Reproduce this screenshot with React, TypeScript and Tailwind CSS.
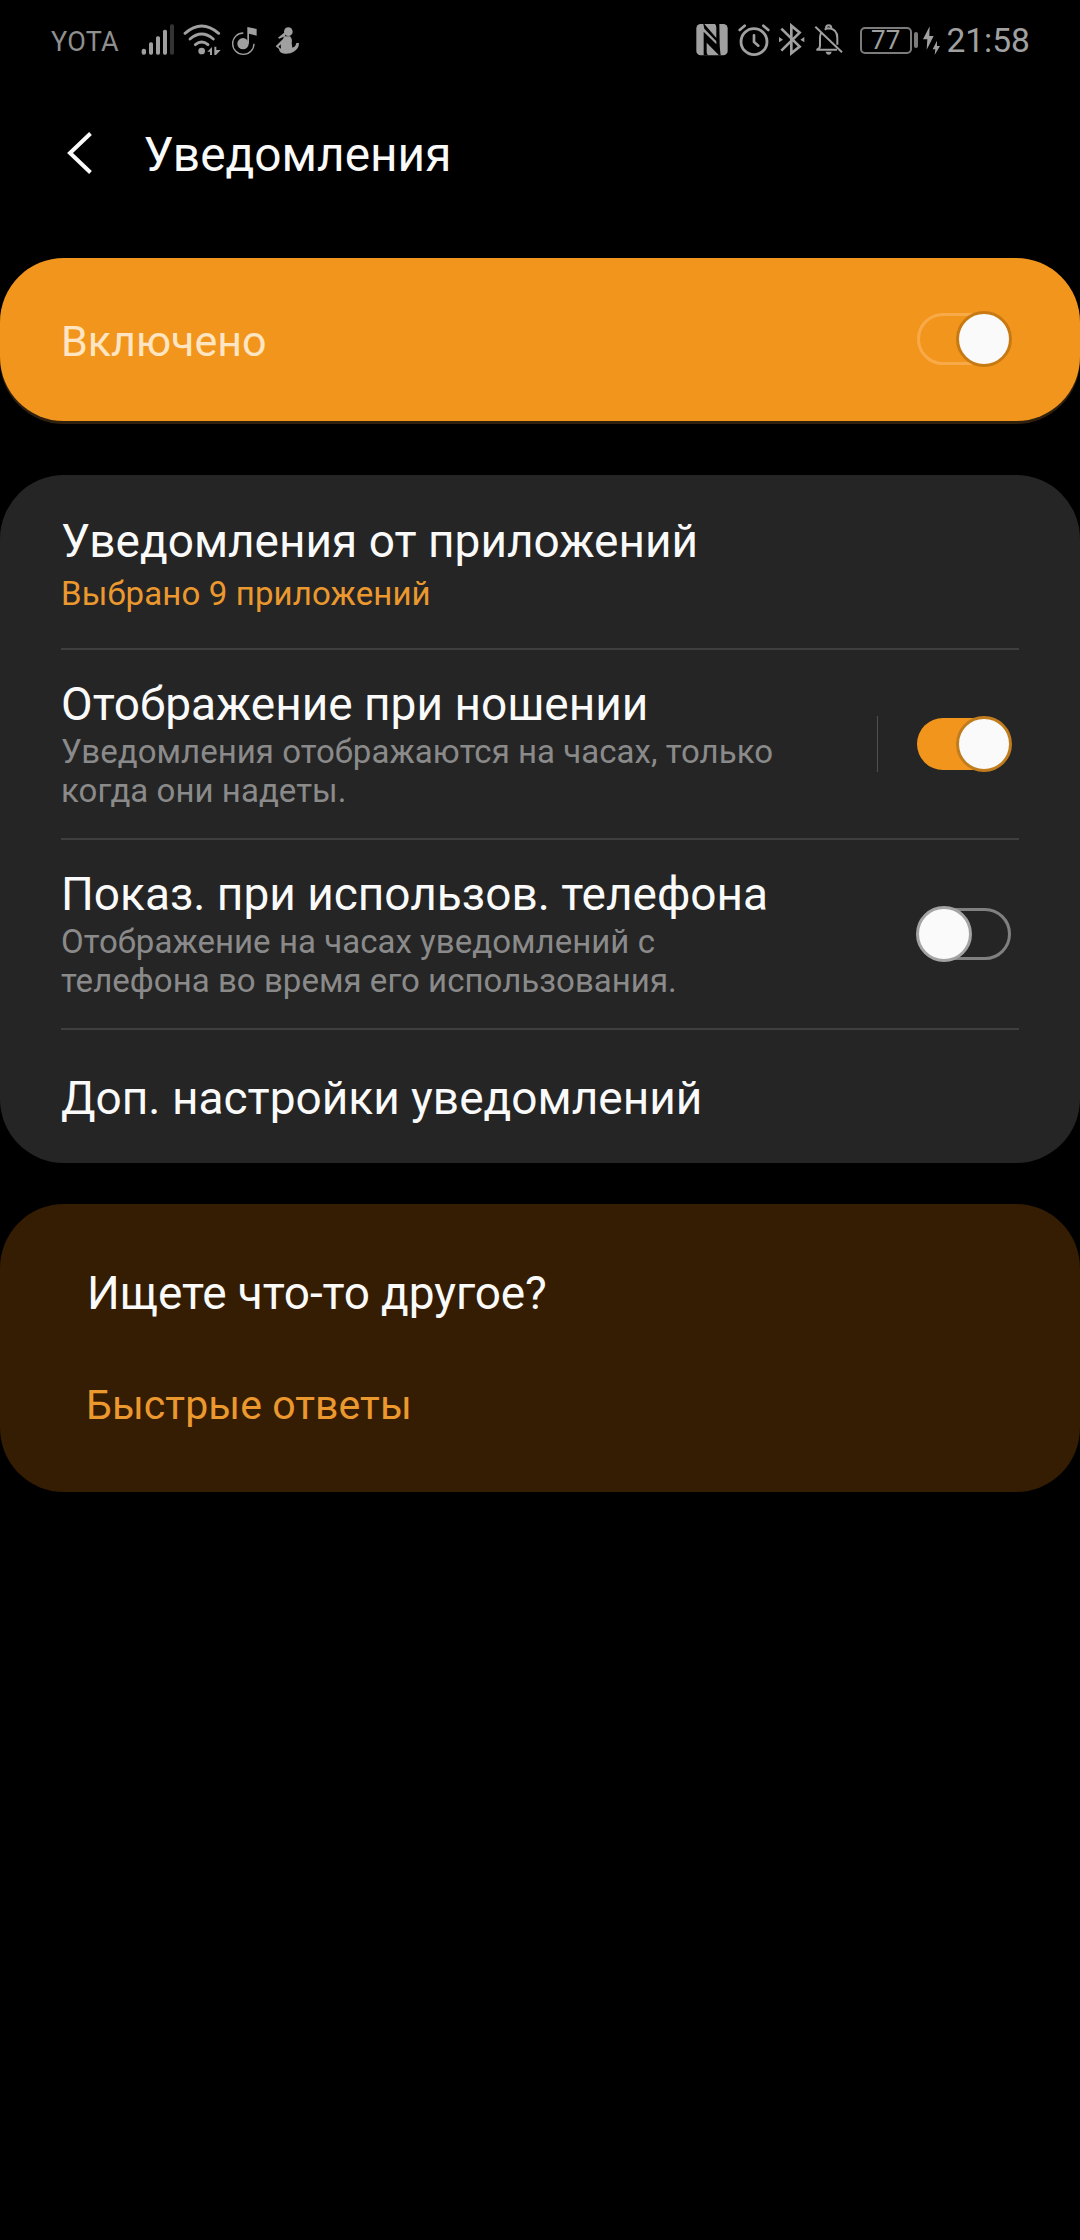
import React from 'react';
import clsx from 'clsx';

const SignalIcon = () => (
  <svg viewBox="333 40 102 100" className="h-[33.33px] w-[34px]" fill="#a0a0a0">
    <rect x="335" y="117" width="13" height="18" rx="6" />
    <rect x="357" y="98" width="12" height="37" rx="5" />
    <rect x="378" y="80" width="12" height="55" rx="5" />
    <rect x="399" y="60" width="12" height="75" rx="5" />
    <rect x="420" y="44" width="12" height="91" rx="5" fill="#333333" />
  </svg>
);

const WifiIcon = () => (
  <svg viewBox="456 40 120 100" className="h-[33.33px] w-10" fill="#a0a0a0">
    <g fill="none" stroke="#a0a0a0" strokeWidth="8.5" strokeLinecap="round">
      <path d="M465 71Q515 27 566 71" />
      <path d="M480 88Q515 58 550 88" />
      <path d="M496 105Q515 89 534 105" />
    </g>
    <circle cx="515" cy="124" r="10" />
    <path d="M532 126l14-14v24h-6v-10zM553 111h6v10h13l-14 15h-5z" />
  </svg>
);

const MusicIcon = () => (
  <svg viewBox="604 40 80 100" className="h-[33.33px] w-[26.67px]" fill="#a0a0a0">
    <path d="M641 70a32 32 0 1 0 32 32" fill="none" stroke="#a0a0a0" strokeWidth="4" />
    <circle cx="640" cy="102" r="17" />
    <path d="M653 52l28 6v20l-23-6v30h-5z" />
  </svg>
);

const FigureIcon = () => (
  <svg viewBox="732 40 78 100" className="h-[33.33px] w-[26px]" fill="#a0a0a0">
    <circle cx="775" cy="66" r="13" />
    <path d="M764 68l-20 16 4 3 18-8zM762 80h18q8 8 5 20l2 14q10-2 12-14h8q0 18-16 26-10 7-26 6-18-2-18-14l-10-8 22-22zM752 104l-7 7 8 6z" fillRule="evenodd" />
  </svg>
);

const NfcIcon = () => (
  <svg viewBox="48 40 97 100" className="h-[33.33px] w-[32.33px]">
    <rect x="49" y="43" width="94" height="94" rx="13" fill="#a0a0a0" />
    <path d="M70 43h3l36 42V54q0-8-4-11h13l1 58q0 12 3 36h-5L80 99v28q0 6 4 10H71V66l38 38v-9L73 57z" fill="#000" />
  </svg>
);

const AlarmIcon = () => (
  <svg viewBox="174 40 96 100" className="h-[33.33px] w-8" fill="none" stroke="#a0a0a0">
    <circle cx="222" cy="96" r="39" strokeWidth="8.5" />
    <path d="M222 77v20l13 11" strokeWidth="8" strokeLinecap="round" />
    <path d="M179 61l15-13M250 48l15 13" strokeWidth="8" strokeLinecap="round" />
  </svg>
);

const BluetoothIcon = () => (
  <svg viewBox="294 40 82 100" className="h-[33.33px] w-[27.33px]" fill="#a0a0a0">
    <path d="M304 57l55 54-25 20V48l25 21-55 54" fill="none" stroke="#a0a0a0" strokeWidth="8" />
    <path d="M297 82l12 8-12 8zM373 82l-12 8 12 8z" />
  </svg>
);

const BellOffIcon = () => (
  <svg viewBox="402 40 88 100" className="h-[33.33px] w-[29.33px]" fill="#a0a0a0">
    <g fill="none" stroke="#a0a0a0" strokeWidth="6">
      <path d="M411 120q9-4 9-12V83q0-8 4-14M434 60q6-4 12-4 26 2 26 29v20M409 120h62" />
      <path d="M438 56q0-9 8-9t8 9" />
      <path d="M406 51l80 77" />
    </g>
    <path d="M437 126h18q-2 9-9 9t-9-9z" />
  </svg>
);

const BoltsIcon = () => (
  <svg viewBox="722 40 56 100" className="h-[33.33px] w-[18.67px]" fill="#a0a0a0">
    <path d="M745 50l-20 39h13l-2 31 21-41h-13zM767 93l-13 26h8l-2 17 16-27h-9z" />
  </svg>
);

interface ToggleProps {
  on: boolean;
  // muted: sits on the accent-coloured card, so the track is only outlined
  muted?: boolean;
}

const Toggle: React.FC<ToggleProps> = ({ on, muted }) => (
  <div className="relative h-14 w-24 shrink-0">
    <div
      className={clsx(
        'absolute inset-x-px inset-y-0.5 rounded-full',
        on && !muted && 'bg-[#f2951d]',
        on && muted && 'border-[3px] border-[#f9aa48]',
        !on && 'border-[3px] border-[#808080]'
      )}
    />
    <div
      className={clsx(
        'absolute top-0 size-14 rounded-full border-[3px] bg-[#fafafa]',
        on ? 'right-0' : 'left-0',
        on ? (muted ? 'border-[#c87a12]' : 'border-[#c17c1d]') : 'border-[#a3a3a3]'
      )}
    />
  </div>
);

const titleClass = 'text-[46px] leading-[56px] whitespace-nowrap text-[#fafafa]';
const hintClass = 'text-[33px] leading-[39px] tracking-[0.04px] whitespace-nowrap text-[#8a8a8a]';

const StatusBar = () => (
  <div className="flex h-20 items-center text-[#a0a0a0]">
    <span className="mt-[3px] ml-[51px] w-[90px] text-[27px] leading-8 tracking-[0.3px] text-[#8f8f8f]">YOTA</span>
    <div className="flex">
      <SignalIcon />
      <div className="ml-[7px]"><WifiIcon /></div>
      <div className="ml-[9px]"><MusicIcon /></div>
      <div className="ml-4"><FigureIcon /></div>
    </div>
    <div className="ml-auto flex items-center">
      <NfcIcon />
      <div className="ml-[10px]"><AlarmIcon /></div>
      <div className="ml-2"><BluetoothIcon /></div>
      <div className="ml-[9px]"><BellOffIcon /></div>
      <div className="ml-4 flex h-[27px] w-[52px] items-center justify-center rounded-[5px] border-2 border-[#7c7c7c] text-[26px] leading-none">
        77
      </div>
      <div className="ml-[2px] h-4 w-1 rounded-sm bg-[#7c7c7c]" />
      <div className="ml-1"><BoltsIcon /></div>
      <span className="mt-px mr-[50px] ml-[6px] text-[33.6px] leading-10">21:58</span>
    </div>
  </div>
);

export default function App() {
  return (
    <div className="flex h-[2240px] w-[1080px] flex-col bg-black font-[Roboto,sans-serif]">
      <StatusBar />

      <header className="flex h-[178px] pt-[46px]">
        <svg viewBox="0 0 26 42" className="mt-[6px] ml-[67px] h-[42px] w-[26px]" fill="none" stroke="#fafafa" strokeWidth="4">
          <path d="M23.5 1.5L3 21l20.5 19.5" />
        </svg>
        <h1 className="mt-px ml-[50.5px] text-[47.8px] leading-[56px] text-[#fafafa]">Уведомления</h1>
      </header>

      <section className="flex h-[163px] shrink-0 items-center justify-between rounded-[64px] bg-[#f2951d] pr-[68px] pl-[61px] shadow-[0_3px_0_#30200e]">
        <span className="mt-[2px] text-[43px] leading-[50px] text-[#ffe5c2]">Включено</span>
        <div className="-mt-px"><Toggle on muted /></div>
      </section>

      <section className="mt-[54px] h-[688px] shrink-0 rounded-[64px] bg-[#252525] px-[61px]">
        <div className="h-[175px] border-b-2 border-[#3f3f3f] pt-[38px]">
          <p className={titleClass}>Уведомления от приложений</p>
          <p className="mt-[5px] text-[33px] leading-[39px] tracking-[0.13px] text-[#eb982f]">Выбрано 9 приложений</p>
        </div>

        <div className="flex h-[190px] items-center border-b-2 border-[#3f3f3f] pr-[7px]">
          <div className="flex-1 pb-[3px]">
            <p className={titleClass}>Отображение при ношении</p>
            <p className={hintClass}>
              Уведомления отображаются на часах, только
              <br />
              когда они надеты.
            </p>
          </div>
          <div className="mr-[38px] h-14 w-px bg-[#4f4f4f]" />
          <Toggle on />
        </div>

        <div className="flex h-[190px] items-center border-b-2 border-[#3f3f3f] pr-[7px]">
          <div className="flex-1 pb-[3px]">
            <p className={titleClass}>Показ. при использов. телефона</p>
            <p className={hintClass}>
              Отображение на часах уведомлений с
              <br />
              телефона во время его использования.
            </p>
          </div>
          <Toggle on={false} />
        </div>

        <div className="pt-10">
          <p className={titleClass}>Доп. настройки уведомлений</p>
        </div>
      </section>

      <section className="mt-[41px] h-[288px] shrink-0 rounded-[64px] bg-[#341d02] pt-[61px] pl-[86px]">
        <p className={clsx(titleClass, 'pl-px tracking-[-0.1px]')}>Ищете что-то другое?</p>
        <p className="mt-[59px] text-[41px] leading-[50px] tracking-[0.07px] text-[#eb982f]">Быстрые ответы</p>
      </section>
    </div>
  );
}
